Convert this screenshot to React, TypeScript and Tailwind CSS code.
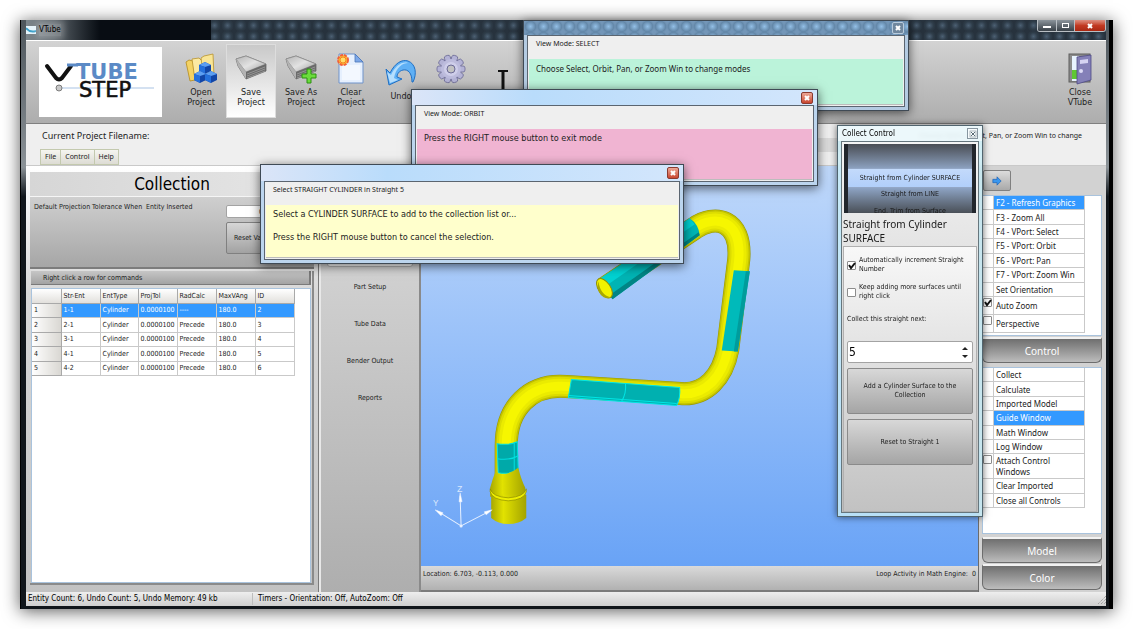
import React from "react";
import clsx from "clsx";

type Entity = {
  strEnt: string;
  radCalc: string;
  id: number;
};

const entities: Entity[] = [
  { strEnt: "1-1", radCalc: "----", id: 2 },
  { strEnt: "2-1", radCalc: "Precede", id: 3 },
  { strEnt: "3-1", radCalc: "Precede", id: 4 },
  { strEnt: "4-1", radCalc: "Precede", id: 5 },
  { strEnt: "4-2", radCalc: "Precede", id: 6 },
];

type Command = { label: string; selected?: boolean; checked?: boolean };

const graphicsCommands: Command[] = [
  { label: "F2 - Refresh Graphics", selected: true },
  { label: "F3 - Zoom All" },
  { label: "F4 - VPort: Select" },
  { label: "F5 - VPort: Orbit" },
  { label: "F6 - VPort: Pan" },
  { label: "F7 - VPort: Zoom Win" },
  { label: "Set Orientation" },
  { label: "Auto Zoom", checked: true },
  { label: "Perspective", checked: false },
];

const controlCommands: Command[] = [
  { label: "Collect" },
  { label: "Calculate" },
  { label: "Imported Model" },
  { label: "Guide Window", selected: true },
  { label: "Math Window" },
  { label: "Log Window" },
  { label: "Attach Control Windows", checked: false },
  { label: "Clear Imported" },
  { label: "Close all Controls" },
];

/* ---------- icons ---------- */

function DriveShape() {
  return (
    <>
      <path d="M1 6 L11 3 L31 11 V18 L11 26 L3 13 Z" fill="#8f8f8f" stroke="#6b6b6b" strokeWidth="0.8" />
      <path d="M1 6 L11 3 L31 11 L11 19 Z" fill="url(#driveTop)" stroke="#8f8f8f" strokeWidth="0.7" />
      <path d="M11 19 L31 11 V18 L11 26 Z" fill="#6a6a6a" />
      <path d="M12 21 L30 14 M12 23 L30 16 M12 25 L30 18" stroke="#a8a8a8" strokeWidth="0.7" />
      <path d="M1 6 L11 19 V26 L3 13 Z" fill="#b3b3b3" />
      <defs>
        <linearGradient id="driveTop" x1="0" y1="0" x2="1" y2="1">
          <stop offset="0" stopColor="#b5b5b5" />
          <stop offset="0.5" stopColor="#e2e2e2" />
          <stop offset="1" stopColor="#9c9c9c" />
        </linearGradient>
      </defs>
    </>
  );
}

function OpenIcon() {
  return (
    <svg viewBox="0 0 32 32" className="size-8">
      <path d="M1 9 L4 7 L8 8 L10 27 L5 28 Z" fill="#f3d264" stroke="#b48a1c" strokeWidth="0.8" />
      <path d="M7 6 L14 5 L16 7 L22 6 L22 24 L10 27 Z" fill="#fbe9a2" stroke="#b9932c" strokeWidth="0.8" />
      <path d="M16 5 L19 3 L28 1 L29 24 L19 27 Z" fill="#f9e596" stroke="#b9932c" strokeWidth="0.8" />
      {[
        [20, 9],
        [15, 18],
        [26, 18],
      ].map(([x, y]) => (
        <g key={x}>
          <path d={`M${x - 6} ${y + 3} l6 -3 l6 3 v6 l-6 3 l-6 -3 Z`} fill="#1146a8" />
          <path d={`M${x - 6} ${y + 3} l6 -3 l6 3 l-6 2 Z`} fill="#5c9ff2" />
          <path d={`M${x - 6} ${y + 3} l6 2 v7 l-6 -3 Z`} fill="#2470dc" />
        </g>
      ))}
    </svg>
  );
}

function SaveIcon() {
  return (
    <svg viewBox="0 0 32 32" className="size-8">
      <DriveShape />
    </svg>
  );
}

function SaveAsIcon() {
  return (
    <svg viewBox="0 0 32 32" className="size-8">
      <DriveShape />
      <path
        d="M22 16 h4 v5 h5 v4 h-5 v5 h-4 v-5 h-5 v-4 h5 Z"
        fill="#6bdc3c"
        stroke="#2c8f10"
        strokeWidth="1"
      />
    </svg>
  );
}

function ClearIcon() {
  return (
    <svg viewBox="0 0 32 32" className="size-8">
      <path d="M4 1 H20 L28 9 V30 H4 Z" fill="#e6f0fe" stroke="#6f93cb" />
      <path d="M20 1 L28 9 H20 Z" fill="#7da8e8" stroke="#4b76b8" strokeWidth="0.8" />
      <path d="M7 12 H25 V27 H7 Z" fill="#f3f8ff" />
      <circle cx="8" cy="7" r="5" fill="#ffc42e" stroke="#f2603a" strokeWidth="2" strokeDasharray="3 1" />
      <circle cx="8" cy="7" r="3" fill="#ffdf6a" stroke="#f0701e" strokeWidth="0.8" />
    </svg>
  );
}

function UndoIcon() {
  return (
    <svg viewBox="0 0 32 32" className="size-8">
      <path
        d="M1 12 L5 16 C10 6 17 2 23 4 C31 7 32 17 28 25 L27 25 C27 16 23 12 18 13 C14 14 12 17 12 20 L17 22 L4 28 Z"
        fill="#5fb0f5"
        stroke="#1f6fc4"
        strokeWidth="1"
      />
      <path d="M2 15 L6 18 C10 9 17 4 23 6 C18 6 11 10 9 21 L13 23 L5 26 Z" fill="#b5defd" />
    </svg>
  );
}

function GearIcon() {
  return (
    <svg viewBox="0 0 32 32" className="size-8">
      <g fill="#b4b3d6" stroke="#6c6b96" strokeWidth="0.8">
        {[18, 54, 90, 126, 162, 198, 234, 270, 306, 342].map((a) => (
          <rect key={a} x="13" y="2" width="6" height="8" rx="2" transform={`rotate(${a} 16 16)`} />
        ))}
      </g>
      <circle cx="16" cy="16" r="10" fill="#bdbcdd" />
      <circle cx="16" cy="16" r="7" fill="#cfceea" />
      <circle cx="16" cy="16" r="4" fill="#c2c2c2" stroke="#6c6b96" />
    </svg>
  );
}

function DoorIcon() {
  return (
    <svg viewBox="0 0 32 32" className="size-8">
      <rect x="5" y="1" width="21" height="28" fill="#8b8b8b" stroke="#5f5f5f" />
      <rect x="8" y="3" width="7" height="25" fill="#e8f3ff" />
      <rect x="8" y="17" width="7" height="9" fill="#5fc832" />
      <path d="M13 4 L27 2 V27 L13 31 Z" fill="#8480b8" stroke="#4e4a86" strokeWidth="0.8" />
      <path d="M16 7 L24 6 V10 L16 11 Z" fill="#d5d3f2" />
      <circle cx="17" cy="18" r="2" fill="#dcdaf5" />
    </svg>
  );
}

function ArrowIcon() {
  return (
    <svg viewBox="0 0 12 12" className="size-[10px]">
      <path d="M1 4 H6 V1 L11 6 L6 11 V8 H1 Z" fill="#3a97ee" stroke="#1b5fb4" strokeWidth="0.8" />
    </svg>
  );
}

function CrossIcon({ dark }: { dark?: boolean }) {
  return (
    <svg viewBox="0 0 8 8" className="size-2">
      <path d="M2 2 L6 6 M6 2 L2 6" stroke={dark ? "#5a6a74" : "#ffffff"} strokeWidth={dark ? 1 : 2} />
      {dark && <rect x="1" y="1" width="6" height="6" fill="none" stroke="#8d9aa2" strokeWidth="0.7" />}
    </svg>
  );
}

function Logo() {
  return (
    <svg viewBox="0 0 123 70" className="h-[70px] w-[123px] bg-white" role="img" aria-label="VTube Step">
      <path d="M20 41 H115" stroke="#a9c3e3" />
      <path
        d="M8 19 L17 31 Q20 34 23 31 L32 19"
        fill="none"
        stroke="#111111"
        strokeWidth="4"
        strokeLinecap="round"
      />
      <text x="37" y="32" className="font-['DejaVu_Sans',sans-serif] text-[21px] font-bold" fill="#5b8ac6">
        TUBE
      </text>
      <path d="M28 18 H39" stroke="#5b8ac6" strokeWidth="3" />
      <text
        x="40"
        y="50"
        className="font-['DejaVu_Sans',sans-serif] text-[21px]"
        fill="#111111"
        stroke="#111111"
        strokeWidth="0.6"
      >
        STEP
      </text>
      <circle cx="20" cy="41" r="3" fill="#c9c9c9" stroke="#666666" strokeWidth="0.8" />
    </svg>
  );
}

/* ---------- small controls ---------- */

function ToolButton({
  icon,
  label,
  hint,
  active,
}: {
  icon: React.ReactNode;
  label?: string;
  hint?: string;
  active?: boolean;
}) {
  return (
    <button
      type="button"
      aria-label={hint}
      className={clsx(
        "flex h-[74px] w-[50px] shrink-0 flex-col items-center border pt-[8px] text-[9px] leading-[10px]",
        active ? "border-[#dddddd] bg-linear-to-b from-[#c9c9c9] to-white" : "border-transparent"
      )}
    >
      {icon}
      {label && <span className="mt-[2px] w-10 text-center">{label}</span>}
    </button>
  );
}

function Tick({ id, checked, label }: { id: string; checked?: boolean; label?: string }) {
  return (
    <span className="relative flex size-[9px] shrink-0">
      <input
        id={id}
        type="checkbox"
        defaultChecked={checked}
        aria-label={label}
        className="peer size-[9px] appearance-none rounded-[1px] border border-[#8c8c8c] bg-white"
      />
      <svg viewBox="0 0 9 9" className="pointer-events-none absolute inset-0 hidden size-[9px] peer-checked:block">
        <path d="M2 4 L4 7 L8 2" fill="none" stroke="#111111" strokeWidth="2" />
      </svg>
    </span>
  );
}

function CommandList({ items, className }: { items: Command[]; className: string }) {
  return (
    <ul
      className={clsx(
        "grid w-[102px] font-['Noto_Sans','DejaVu_Sans',sans-serif] text-[8px] leading-[11px]",
        className
      )}
    >
      {items.map((item) => (
        <li key={item.label} className="flex min-h-0 border-r border-b border-[#c9c9c9]">
          <span className="flex w-[11px] shrink-0 justify-start border-r border-[#c9c9c9] pt-px">
            {item.checked !== undefined && (
              <Tick id={item.label} checked={item.checked} label={item.label} />
            )}
          </span>
          <button
            type="button"
            className={clsx(
              "flex flex-1 items-center pl-[2px] text-left",
              item.selected && "bg-[#3399ff] text-white"
            )}
          >
            {item.label}
          </button>
        </li>
      ))}
    </ul>
  );
}

function SectionButton({ label }: { label: string }) {
  return (
    <button
      type="button"
      className="h-[26px] w-full shrink-0 rounded-b-md border border-t-2 border-[#6d6d6d] border-t-[#f2f2f2] bg-linear-to-b from-[#6f6f6f] to-[#bdbdbd] font-['Noto_Sans',sans-serif] text-[10px] leading-4 text-white"
    >
      {label}
    </button>
  );
}

function GuideWindow({
  title,
  lines,
  frameClass,
  barClass,
  bodyClass,
  closeClass,
}: {
  title: string;
  lines: string[];
  frameClass: string;
  barClass: string;
  bodyClass: string;
  closeClass: string;
}) {
  return (
    <section
      className={clsx(
        "absolute flex flex-col border border-[#3f4a55] px-[3px] pb-[3px] shadow-[0_2px_10px_rgba(0,0,0,0.6)]",
        frameClass
      )}
    >
      <header className={clsx("-mx-[3px] flex shrink-0 items-center justify-end px-[4px]", barClass)}>
        <button
          type="button"
          aria-label="Close"
          className={clsx("flex size-[12px] items-center justify-center rounded-[2px] border", closeClass)}
        >
          <CrossIcon />
        </button>
      </header>
      <div className="flex flex-1 flex-col border border-[#5b6570] bg-[#efefef] px-px pb-px">
        <h2 className="h-[23px] shrink-0 pl-[7px] font-['Noto_Sans','DejaVu_Sans',sans-serif] text-[7px] leading-4">
          {title}
        </h2>
        <div
          className={clsx(
            "flex flex-1 flex-col gap-3 border-b border-[#bcbcbc] pt-[4px] pl-[7px] leading-[11px]",
            bodyClass
          )}
        >
          {lines.map((line) => (
            <p key={line}>{line}</p>
          ))}
        </div>
      </div>
    </section>
  );
}

/* ---------- 3D view ---------- */

const tubePath =
  "M604 289 L694 229 C714 215 741 220 738 260 L727 350 C722 377 705 396 680 394 L566 387 C530 384 506 408 506 446 L506 476";

function TubeModel() {
  return (
    <svg viewBox="421 167 556 399" preserveAspectRatio="xMinYMin slice" className="block min-h-0 w-full flex-1">
      <defs>
        <linearGradient id="base" x1="0" y1="0" x2="1" y2="0">
          <stop offset="0" stopColor="#a8a800" />
          <stop offset="0.35" stopColor="#e2e200" />
          <stop offset="1" stopColor="#a3a300" />
        </linearGradient>
      </defs>
      <g fill="none">
        <path d={tubePath} stroke="#979700" strokeWidth="23" />
        <path d={tubePath} stroke="#c2c200" strokeWidth="22" />
        <path d={tubePath} stroke="#dcdc00" strokeWidth="19" />
        <path d={tubePath} stroke="#ebeb00" strokeWidth="15" />
        <path d={tubePath} stroke="#f6f600" strokeWidth="9" />
      </g>

      {/* far straight */}
      <path d="M600 279 L689 219 Q698 225 699 236 L612 300 Z" fill="#00b4b4" />
      <path d="M600 279 L689 219 L694 225 L605 287 Z" fill="#00d2d2" />
      <path d="M609 296 L698 233 L699 236 L612 300 Z" fill="#008585" />
      <ellipse cx="604" cy="289" rx="6" ry="11" transform="rotate(-34 604 289)" fill="#f2f200" stroke="#8f8f00" />
      <path d="M598 282 Q600 296 610 298 Q600 301 597 288 Z" fill="#a8a800" />

      {/* picked surfaces */}
      <path d="M733 271 L749 272 L737 352 L721 351 Z" fill="#00baba" />
      <path d="M745 272 L749 272 L737 352 L733 352 Z" fill="#009c9c" />
      <path d="M571 380 L679 388 Q680 398 676 406 L568 398 Z" fill="#00b0b0" stroke="#00e6e6" />
      <path d="M625 384 Q626 394 621 402 M568 396 L676 404" fill="none" stroke="#00e6e6" />
      <path d="M497 444 Q508 446 517 442 L518 470 Q510 475 498 473 Z" fill="#00a9a9" stroke="#00e0e0" />
      <path d="M497 459 Q510 461 518 456 M514 443 V472" fill="none" stroke="#00e0e0" />

      {/* end fitting */}
      <path d="M496 470 L498 474 Q508 476 518 468 Q521 480 525 488 V497 H490 V488 Q492 480 496 470 Z" fill="url(#base)" />
      <path d="M491 495 V518 Q498 524 508 524 Q519 524 526 518 V495 Z" fill="url(#base)" />
      <path
        d="M490 489 Q492 497 508 498 Q524 497 526 489 V492 Q524 500 508 501 Q492 500 490 492 Z"
        fill="#eeee00"
        stroke="#8f8f00"
        strokeWidth="0.7"
      />

      {/* axes */}
      <g stroke="#e8f1ff" fill="#ffffff">
        <path d="M461 526 L437 511 M461 526 L460 496 M461 526 L490 511" fill="none" />
        <path d="M435 510 L443 513 L441 516 Z M460 493 L459 502 L462 502 Z M492 510 L484 512 L486 515 Z" strokeWidth="0.5" />
        <circle cx="461" cy="526" r="1" />
      </g>
      <g className="font-['Liberation_Mono',monospace] text-[9px]" fill="#dbe8fd">
        <text x="433" y="506">Y</text>
        <text x="457" y="492">Z</text>
      </g>
    </svg>
  );
}

/* ---------- panels ---------- */

function CollectionPanel() {
  return (
    <section className="flex w-[293px] shrink-0 flex-col border-r border-[#7b7b7b] bg-linear-to-b from-white via-[#d8d8d8] via-30% to-[#c2c2c2] px-1 pt-[6px]">
      <h1 className="h-6 shrink-0 bg-linear-to-r from-[#d6d6d6] to-[#e6e6e6] text-center text-[17px] leading-6 text-black">
        Collection
      </h1>
      <div className="mt-px flex h-[72px] shrink-0 justify-between border-b-2 border-[#7c7c7c] bg-linear-to-b from-[#cfcfcf] to-[#a6a6a6] pr-2 pl-1">
        <label htmlFor="tolerance" className="pt-[5px] text-[7px] leading-[10px]">
          Default Projection Tolerance When&nbsp; Entity Inserted
        </label>
        <div className="flex w-[80px] flex-col gap-1 pt-2">
          <input
            id="tolerance"
            defaultValue="0.0000100"
            className="h-[13px] w-full rounded-[2px] border border-[#a3a3a3] bg-white px-3 text-right text-[7px]"
          />
          <button
            type="button"
            className="h-8 rounded-[2px] border border-[#808080] bg-linear-to-b from-[#d6d6d6] to-[#a2a2a2] pl-[7px] text-left text-[7px]"
          >
            Reset Values
          </button>
        </div>
      </div>
      <div className="mt-[2px] flex min-h-0 flex-1 flex-col border-r-2 border-b-2 border-[#8a8a8a] px-px">
        <p className="h-[14px] shrink-0 border-r-2 border-b border-[#7a7a7a] bg-linear-to-b from-[#c6c6c6] to-[#a3a3a3] pl-3 text-[7px] leading-[14px]">
          Right click a row for commands
        </p>
        <div className="mt-[3px] min-h-0 flex-1 border border-[#a9c3dd] bg-white">
          <table className="h-[87px] w-[262px] table-fixed border-collapse text-left text-[7px] leading-[10px]">
            <colgroup>
              <col className="w-[29px]" />
              <col className="w-[39px]" />
              <col className="w-[38px]" />
              <col className="w-[39px]" />
              <col className="w-[39px]" />
              <col className="w-[39px]" />
              <col className="w-[39px]" />
            </colgroup>
            <thead>
              <tr className="h-[14px] bg-linear-to-b from-white to-[#e2e0dc]">
                {["", "Str-Ent", "EntType", "ProjTol", "RadCalc", "MaxVAng", "ID"].map((h) => (
                  <th key={h} className="border-r border-b border-[#a9a9a9] p-0 pl-[2px] font-normal">
                    {h}
                  </th>
                ))}
              </tr>
            </thead>
            <tbody>
              {entities.map((row, i) => (
                <tr key={row.id} className={clsx("h-[14px]", i === 0 && "bg-[#3399ff] text-white")}>
                  <th
                    scope="row"
                    className="border-r border-b border-[#a9a9a9] bg-linear-to-r from-white to-[#d9d7d2] p-0 pl-[2px] font-normal text-[#222222]"
                  >
                    {i + 1}
                  </th>
                  {[row.strEnt, "Cylinder", "0.0000100", row.radCalc, "180.0", row.id].map((v, c) => (
                    <td key={c} className="border-r border-b border-[#c9c9c9] p-0 pl-[2px] whitespace-nowrap">
                      {v}
                    </td>
                  ))}
                </tr>
              ))}
            </tbody>
          </table>
        </div>
      </div>
      <div className="h-[7px] shrink-0" />
    </section>
  );
}

function PageTabs() {
  return (
    <nav className="flex w-[102px] shrink-0 flex-col border-x-2 border-[#8a8a8a] border-l-[#e8e8e8] bg-linear-to-b from-[#dcdcdc] to-[#aeaeae] px-[6px] pt-[67px] text-[7px]">
      {["Collection", "Part Setup", "Tube Data", "Bender Output", "Reports"].map((tab, i) => (
        <button
          key={tab}
          type="button"
          className={clsx(
            "mb-[3px] h-[34px] shrink-0 rounded-[3px]",
            i === 0 && "border border-[#b5b5b5] bg-linear-to-b from-[#e3e3e3] to-white"
          )}
        >
          {tab}
        </button>
      ))}
    </nav>
  );
}

function CollectControl() {
  return (
    <section className="absolute top-[125px] left-[837px] flex h-[392px] w-[146px] flex-col border border-[#51656f] bg-[#c9edf6]/80 px-[3px] pb-[3px] shadow-[0_0_7px_rgba(0,0,0,0.6)] backdrop-blur-[2px]">
      <header className="-mx-[3px] flex h-[15px] shrink-0 items-center justify-between bg-white/60 px-[4px]">
        <h2 className="text-[8px] leading-[14px] text-black">Collect Control</h2>
        <button
          type="button"
          aria-label="Close"
          className="flex size-[11px] items-center justify-center border border-[#8796a0] bg-white/60"
        >
          <CrossIcon dark />
        </button>
      </header>
      <div className="flex flex-1 flex-col border border-[#66767d] bg-linear-to-b from-[#f4f4f4] to-[#bdbdbd] px-px pt-[2px]">
        <div className="mx-px h-[69px] shrink-0 overflow-hidden border-x-4 border-[#22262c] bg-linear-to-b from-[#4a4e55] via-[#a9c6f0] via-50% to-[#4a5058] text-center text-[7px] text-[#1a1a1a]">
          <div className="h-[24px]" />
          <div className="h-5 border-y border-[#93a7c6] bg-linear-to-b from-[#c3dafb] to-[#b1cffa] leading-[19px] whitespace-nowrap">
            Straight from Cylinder SURFACE
          </div>
          <div className="h-[13px] leading-[13px]">Straight from LINE</div>
          <div className="h-5 leading-5">End, Trim from Surface</div>
        </div>
        <p className="shrink-0 pt-[4px] font-['Noto_Sans',sans-serif] text-[10px] leading-[14px] text-[#1a1a1a]">
          Straight from Cylinder SURFACE
        </p>
        <div className="mt-px flex flex-1 flex-col border border-[#b0b0b0] bg-linear-to-b from-[#f8f8f8] to-[#c2c2c2] px-[3px] pt-[9px] text-[7px] leading-[9px]">
          <div className="flex items-center gap-[3px]">
            <Tick id="auto-increment" checked />
            <label htmlFor="auto-increment">Automatically increment Straight Number</label>
          </div>
          <div className="mt-[9px] flex items-center gap-[3px]">
            <Tick id="keep-adding" />
            <label htmlFor="keep-adding">Keep adding more surfaces until right click</label>
          </div>
          <label htmlFor="straight" className="mt-[14px]">
            Collect this straight next:
          </label>
          <div className="mt-[17px] flex h-[22px] shrink-0 items-center rounded-[2px] border border-[#a3a3a3] bg-white pr-1 pl-px">
            <input id="straight" defaultValue="5" className="w-full min-w-0 text-[12px] leading-5 text-black" />
            <div className="flex flex-col gap-[5px]">
              <button type="button" aria-label="Increase">
                <svg viewBox="0 0 6 4" className="h-1 w-[6px]">
                  <path d="M0 4 L3 1 L6 4 Z" fill="#222222" />
                </svg>
              </button>
              <button type="button" aria-label="Decrease">
                <svg viewBox="0 0 6 4" className="h-1 w-[6px]">
                  <path d="M0 0 L3 3 L6 0 Z" fill="#222222" />
                </svg>
              </button>
            </div>
          </div>
          <button
            type="button"
            className="mt-[5px] h-[46px] shrink-0 rounded-[2px] border border-[#8a8a8a] bg-linear-to-b from-[#d8d8d8] to-[#a5a5a5] px-3"
          >
            Add a Cylinder Surface to the Collection
          </button>
          <button
            type="button"
            className="mt-[5px] h-[46px] shrink-0 rounded-[2px] border border-[#8a8a8a] bg-linear-to-b from-[#d8d8d8] to-[#a5a5a5] px-3"
          >
            Reset to Straight 1
          </button>
        </div>
      </div>
    </section>
  );
}

function TitleBar() {
  return (
    <header className="flex h-5 shrink-0 items-start justify-between bg-[#27323d] bg-[radial-gradient(circle,#4c6073_0,#2f3d4a_45%,transparent_75%)] bg-[size:13px_11px]">
      <div className="flex h-full w-[185px] items-center gap-[3px] bg-linear-to-r from-[#7d868c] via-[#5d656b] via-15% to-[#080d13] to-40%">
        <svg viewBox="0 0 10 8" className="h-2 w-[10px]">
          <rect width="10" height="8" fill="#e6f4fb" />
          <path d="M0 2 Q4 7 10 5" fill="none" stroke="#3a9fc9" strokeWidth="2" />
        </svg>
        <span className="bg-white/25 text-[8px] leading-3 text-black shadow-[0_0_6px_3px_rgba(255,255,255,0.25)]">
          VTube
        </span>
      </div>
      <div className="flex h-3 overflow-hidden rounded-b-[3px] border border-t-0 border-[#b9bfc4] text-white">
        <button type="button" aria-label="Minimize" className="flex w-[19px] items-end justify-center border-r border-[#b9bfc4] bg-linear-to-b from-[#8b949b] to-[#394148] pb-[3px]">
          <span className="h-[2px] w-2 bg-white" />
        </button>
        <button type="button" aria-label="Maximize" className="flex w-[18px] items-center justify-center border-r border-[#b9bfc4] bg-linear-to-b from-[#8b949b] to-[#394148]">
          <span className="h-[5px] w-[7px] border border-white" />
        </button>
        <button type="button" aria-label="Close" className="flex w-[30px] items-center justify-center bg-linear-to-b from-[#dd8f80] via-[#c23a22] to-[#a92812]">
          <CrossIcon />
        </button>
      </div>
    </header>
  );
}

export default function App() {
  return (
    <div className="relative flex min-h-screen bg-white p-5 font-['DejaVu_Sans_Condensed','DejaVu_Sans',sans-serif] text-[#222222]">
      <div className="flex flex-1 flex-col border-r-4 border-l border-black bg-linear-to-b from-[#4d555b] via-[#8b9297] via-25% to-[#11161b] to-30% pr-[3px] pb-[3px] pl-[5px] shadow-[0_2px_16px_rgba(0,0,0,0.65)]">
        <TitleBar />

        {/* toolbar */}
        <div className="flex h-[84px] shrink-0 items-start justify-between border-t border-b border-[#808080] border-t-white bg-linear-to-b from-[#d3d3d3] to-[#adadad] pt-[3px] pr-px pl-[13px]">
          <div className="flex items-start">
            <div className="mr-[14px] pt-[3px]">
              <Logo />
            </div>
            <ToolButton icon={<OpenIcon />} label="Open Project" />
            <ToolButton icon={<SaveIcon />} label="Save Project" active />
            <ToolButton icon={<SaveAsIcon />} label="Save As Project" />
            <ToolButton icon={<ClearIcon />} label="Clear Project" />
            <div className="pt-[4px]">
              <ToolButton icon={<UndoIcon />} label="Undo" />
            </div>
            <ToolButton icon={<GearIcon />} hint="Setup" />
            <svg viewBox="0 0 10 24" className="mt-[26px] ml-[22px] h-6 w-[10px]">
              <path d="M0 1 H10" stroke="#111111" strokeWidth="2" />
              <path d="M5 0 V24" stroke="#111111" strokeWidth="3" />
            </svg>
          </div>
          <ToolButton icon={<DoorIcon />} label="Close VTube" />
        </div>

        {/* project line and menu */}
        <div className="flex h-[42px] shrink-0 justify-between border-b border-[#c9c9c9] bg-[#efefef] pr-6 pl-[14px] font-['Noto_Sans','DejaVu_Sans',sans-serif] text-[7px]">
          <div>
            <p className="pt-[6px] pl-[2px] text-[9px] leading-3">Current Project Filename:</p>
            <div className="mt-[7px] flex h-4">
              {["File", "Control", "Help"].map((m) => (
                <button
                  key={m}
                  type="button"
                  className="-mr-px border border-[#c3c9ae] bg-linear-to-b from-[#f5f5f0] to-[#dddcd4] px-[4px]"
                >
                  {m}
                </button>
              ))}
            </div>
          </div>
          <div className="mt-[14px] mr-6 ml-[270px] h-[14px] flex-1 bg-[#dadada]" />
          <p className="pt-[7px] leading-[10px]">Choose Select, Orbit, Pan, or Zoom Win to change</p>
        </div>

        <main className="flex min-h-0 flex-1">
          <CollectionPanel />
          <PageTabs />

          <div className="flex min-w-0 flex-1 flex-col">
            <div className="flex min-h-0 flex-1 flex-col bg-linear-to-b from-[#bfd8fa] to-[#69a3f6]">
              <TubeModel />
            </div>
            <div className="flex h-[26px] shrink-0 justify-between border-b-2 border-[#7b7b7b] bg-linear-to-b from-[#dadada] to-[#b1b1b1] px-[2px] pt-[3px] text-[7px] leading-[10px]">
              <span>Location: 6.703, -0.113, 0.000</span>
              <span>Loop Activity in Math Engine:&nbsp; 0</span>
            </div>
          </div>

          {/* right column */}
          <aside className="flex w-[128px] shrink-0 flex-col border-l border-[#6b6b6b] bg-[#d2d2d2] pr-1 pl-[3px]">
            <button
              type="button"
              aria-label="Next"
              className="mt-1 ml-px flex h-[21px] w-[28px] shrink-0 items-center justify-center rounded-[2px] border border-[#808080] bg-linear-to-b from-[#dcdcdc] to-[#a9a9a9]"
            >
              <ArrowIcon />
            </button>
            <div className="mt-1 h-[141px] shrink-0 border border-[#a9c3dd] bg-white">
              <CommandList items={graphicsCommands} className="h-[137px] grid-rows-[repeat(7,1fr)_18px_18px]" />
            </div>
            <div className="pt-px">
              <SectionButton label="Control" />
            </div>
            <div className="mt-1 min-h-0 flex-1 border border-[#a9c3dd] bg-white">
              <CommandList items={controlCommands} className="h-[140px] grid-rows-[repeat(6,1fr)_25px_1fr_1fr]" />
            </div>
            <div className="flex flex-col gap-px pt-[3px] pb-[2px]">
              <SectionButton label="Model" />
              <SectionButton label="Color" />
            </div>
          </aside>
        </main>

        <footer className="flex h-[14px] shrink-0 items-center bg-linear-to-b from-[#eeeeee] to-[#cfcfcf] pl-[2px] text-[8px] leading-3 text-black">
          <span className="w-[225px] border-r border-[#bdbdbd]">
            Entity Count: 6, Undo Count: 5, Undo Memory: 49 kb
          </span>
          <span className="flex-1 pl-[5px]">Timers - Orientation: Off, AutoZoom: Off</span>
          <svg viewBox="0 0 9 9" className="size-[9px]">
            <path d="M9 1 L1 9 M9 4 L4 9 M9 7 L7 9" stroke="#8b8b8b" strokeDasharray="1 1" />
          </svg>
        </footer>
      </div>

      <GuideWindow
        title="View Mode: SELECT"
        lines={["Choose Select, Orbit, Pan, or Zoom Win to change modes"]}
        frameClass="top-[20px] left-[523px] h-[91px] w-[386px] bg-[#b4cbe2]"
        barClass="h-[14px] bg-[#7396b8] bg-[radial-gradient(circle,#93bfe6_0,#6488a9_60%,transparent_80%)] bg-[size:13px_11px]"
        bodyClass="bg-[#bbf3da] font-['Noto_Sans','DejaVu_Sans',sans-serif] text-[8px]"
        closeClass="border-[#b9cbdc] bg-[#6f879e]"
      />
      <GuideWindow
        title="View Mode: ORBIT"
        lines={["Press the RIGHT mouse button to exit mode"]}
        frameClass="top-[89px] left-[411px] h-[97px] w-[407px] bg-[#bcd5ee]"
        barClass="h-[15px] bg-linear-to-r from-[#dbe5f8] via-[#b9dcfb] via-30% to-[#d3e6fc]"
        bodyClass="bg-[#f0b4d2] text-[9px]"
        closeClass="border-[#8a3a30] bg-linear-to-b from-[#eba696] to-[#c8442e]"
      />
      <GuideWindow
        title="Select STRAIGHT CYLINDER in Straight 5"
        lines={[
          "Select a CYLINDER SURFACE to add to the collection list or...",
          "Press the RIGHT mouse button to cancel the selection.",
        ]}
        frameClass="top-[164px] left-[260px] h-[100px] w-[424px] bg-[#bcd5ee]"
        barClass="h-[16px] bg-linear-to-r from-[#dbe5f8] via-[#b9dcfb] via-30% to-[#d3e6fc]"
        bodyClass="bg-[#ffffcc] text-[9px]"
        closeClass="border-[#8a3a30] bg-linear-to-b from-[#eba696] to-[#c8442e]"
      />
      <CollectControl />
    </div>
  );
}
